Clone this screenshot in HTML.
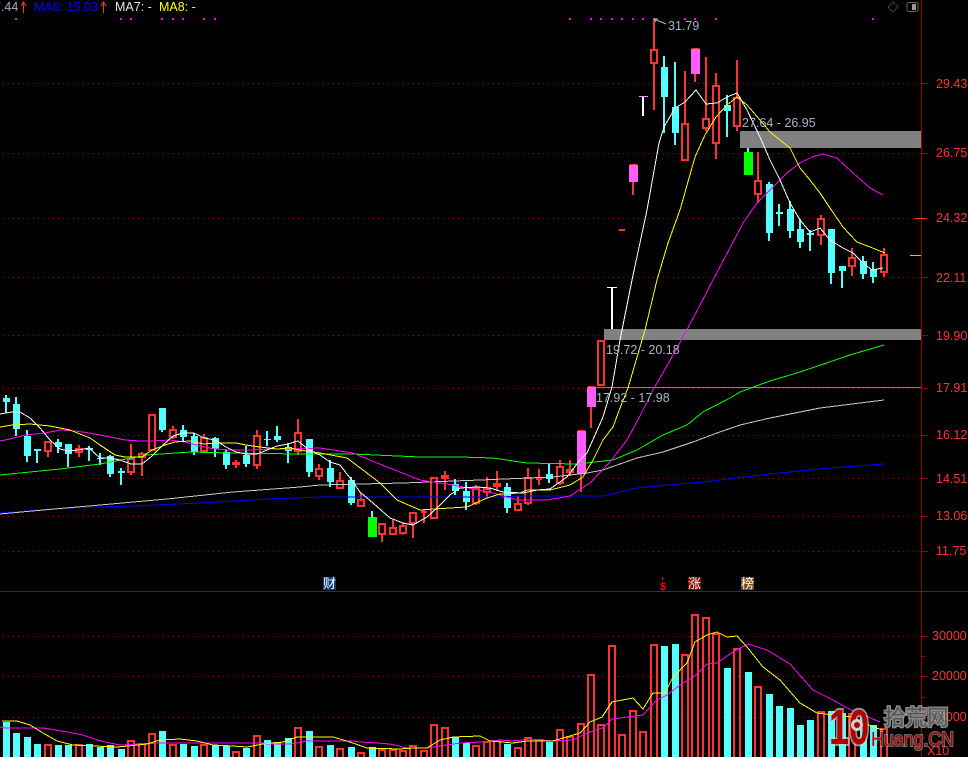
<!DOCTYPE html>
<html><head><meta charset="utf-8"><title>K线图</title>
<style>
html,body{margin:0;padding:0;background:#000;width:968px;height:757px;overflow:hidden}
svg{display:block}
text{font-family:"Liberation Sans","Noto Sans CJK SC",sans-serif;font-size:12.5px}
.a{fill:#ff3232}
.l{fill:#a8b4c4}
.v{fill:none;stroke-width:1;shape-rendering:crispEdges}
</style></head><body>
<svg width="968" height="757" viewBox="0 0 968 757" xmlns="http://www.w3.org/2000/svg">
<rect width="968" height="757" fill="#000"/>
<!-- grid -->
<g stroke="#a00000" stroke-width="1" stroke-dasharray="1 4" shape-rendering="crispEdges">
<path d="M3 83.5H921M3 153.5H921M3 218.5H921M3 277.5H921M3 335.5H921M3 388.5H921M3 435.5H921M3 478.5H921M3 516.5H921M3 551.5H921M3 636.5H921M3 676.5H921M3 717.5H921"/>
</g>
<!-- axes -->
<g stroke="#a00000" stroke-width="1" shape-rendering="crispEdges" fill="none">
<path d="M921.5 0V757M0 591.5H968"/>
<path d="M921 83.5h7M921 153.5h7M921 218.5h7M921 277.5h7M921 335.5h7M921 388.5h7M921 435.5h7M921 478.5h7M921 516.5h7M921 551.5h7M921 636.5h7M921 676.5h7M921 717.5h7M921 656.5h4M921 697.5h4M921 737.5h4"/>
</g>
<path d="M915 218.5h11" stroke="#ff3232" shape-rendering="crispEdges"/>
<path d="M910 255.5h11" stroke="#cccc00" shape-rendering="crispEdges"/>
<!-- zones -->
<rect x="740" y="131" width="181" height="17" fill="#808080"/>
<rect x="604" y="329" width="317" height="11" fill="#808080"/>
<path d="M596 387.5H921" stroke="#808080" shape-rendering="crispEdges"/>
<!-- top dots -->
<path d="M15 18h2v2h-2zM120 18h2v2h-2zM130 18h2v2h-2zM161 18h2v2h-2zM172 18h2v2h-2zM182 18h2v2h-2zM203 18h2v2h-2zM214 18h2v2h-2zM569 18h2v2h-2zM590 18h2v2h-2zM600 18h2v2h-2zM611 18h2v2h-2zM621 18h2v2h-2zM632 18h2v2h-2zM642 18h2v2h-2zM653 18h2v2h-2zM684 18h2v2h-2zM694 18h2v2h-2zM715 18h2v2h-2zM872 18h2v2h-2z" fill="#ff00ff"/>
<!-- candles: wicks -->
<g shape-rendering="crispEdges">
<path stroke="#ff3232" stroke-width="2" fill="none" d="M48 441V457M79 445V457M131 444V475M142 452V476M173 426V439M204 434V453M236 460V468M257 430V469M298 419V455M319 464V480M340 472V489M361 493V507M382 523V542M393 520V535M403 523V535M413 512V538M424 510V523M445 471V490M476 485V505M487 477V498M497 471V491M518 496V511M528 468V505M539 469V485M560 460V485M570 460V476M581 474V492M591 407V428M633 182V195M654 19V110M685 71V123M695 74V82M706 57V131M716 73V159M737 60V131M758 152V203M821 215V245M852 248V276M884 248V277"/>
<path stroke="#54ffff" stroke-width="2" fill="none" d="M6 395V413M16 397V436M27 430V462M37 449V463M58 439V453M68 444V467M89 446V461M100 453V465M110 455V477M121 468V485M162 430V432M183 425V441M194 433V455M215 437V457M226 450V469M246 446V467M267 431V446M277 426V442M288 443V463M309 472V477M330 460V487M351 477V505M372 511V517M455 479V495M466 482V510M507 483V513M549 464V483M664 56V133M675 62V145M727 95V137M748 148V152M769 182V241M779 204V226M790 201V238M800 219V248M810 230V251M831 273V284M842 271V288M863 256V279M873 262V283"/>
<!-- hollow red bodies -->
<path stroke="#ff3232" stroke-width="2" fill="#000" d="M45 442h6v9h-6zM76 449h6v3h-6zM128 459h6v13h-6zM139 454h6v3h-6zM149 415h6v35h-6zM170 430h6v7h-6zM201 438h6v13h-6zM233 463h6v1h-6zM254 436h6v29h-6zM295 433h6v18h-6zM316 469h6v7h-6zM337 481h6v7h-6zM358 500h6v6h-6zM379 524h6v10h-6zM390 528h6v6h-6zM400 526h6v7h-6zM410 513h6v10h-6zM421 512h6v0h-6zM431 478h6v40h-6zM442 476h6v2h-6zM473 488h6v15h-6zM484 489h6v3h-6zM494 484h6v2h-6zM515 504h6v6h-6zM525 478h6v25h-6zM536 479h6v0h-6zM557 467h6v16h-6zM567 470h6v2h-6zM598 341h6v44h-6zM619 230h6v0h-6zM651 50h6v13h-6zM682 124h6v36h-6zM703 119h6v9h-6zM713 86h6v57h-6zM734 98h6v28h-6zM755 181h6v13h-6zM818 219h6v16h-6zM849 258h6v8h-6zM881 255h6v17h-6z"/>
<!-- cyan bodies -->
<path fill="#54ffff" d="M3 398h7v4h-7zM13 404h7v25h-7zM24 436h7v20h-7zM34 449h7v2h-7zM55 442h7v5h-7zM65 444h7v10h-7zM86 448h7v2h-7zM97 458h7v1h-7zM107 456h7v18h-7zM118 471h7v2h-7zM159 408h7v22h-7zM180 430h7v7h-7zM191 436h7v16h-7zM212 438h7v11h-7zM223 452h7v13h-7zM243 455h7v9h-7zM264 439h7v1h-7zM274 436h7v4h-7zM285 447h7v4h-7zM306 439h7v33h-7zM327 468h7v14h-7zM348 480h7v23h-7zM452 484h7v7h-7zM463 491h7v11h-7zM504 487h7v21h-7zM546 474h7v5h-7zM661 67h7v30h-7zM672 107h7v26h-7zM724 105h7v6h-7zM766 184h7v49h-7zM776 212h7v2h-7zM787 209h7v22h-7zM797 229h7v13h-7zM807 233h7v2h-7zM828 229h7v44h-7zM839 266h7v5h-7zM860 261h7v13h-7zM870 269h7v8h-7z"/>
<!-- magenta, green, white -->
<path fill="#ff5cff" d="M577 431h9v43h-9zM587 387h9v20h-9zM629 165h9v17h-9zM691 49h9v25h-9z"/>
<path fill="#ff3232" d="M578 430h7v1h-7zM588 386h7v1h-7zM630 164h7v1h-7zM692 48h7v1h-7z"/>
<path fill="#00ff00" d="M744 152h9v23h-9zM368 517h9v20h-9z"/>
<path fill="#fff" d="M611 287h2v42h-2zM642 97h2v19h-2zM607 287h10v1h-10z"/>
<path fill="#ff90ff" d="M639 96h9v1h-9z"/>
</g>
<!-- MA lines -->
<polyline class="v" stroke="#0000ff" points="0,513 67,508 133,506 200,503 267,499 320,497 400,497 500,497 520,496 603,496 637,488 703,482 770,474 830,468 884,464"/>
<polyline class="v" stroke="#c8c8c8" points="0,514 43,510 100,505 167,499 233,492 300,487 320,485 403,483 480,480 553,477 587,473 603,470 637,458 663,452 693,442 717,433 740,425 770,418 820,408 884,400"/>
<polyline class="v" stroke="#00ff00" points="0,475 30,472 60,469 100,464 147,455 190,452 230,453 300,454 353,454 420,457 460,457 493,458 527,463 577,464 613,460 637,450 663,435 687,425 703,412 730,398 740,392 770,381 800,372 850,355 884,345"/>
<polyline class="v" stroke="#ff00ff" points="0,441 10,439 25,435 45,433 60,430 75,431 90,433 105,436 125,440 140,441 152,441 170,440 185,442 200,446 215,449 230,450 250,450 270,449 290,449 320,448 353,453 377,463 420,480 453,485 473,489 493,493 517,500 547,500 570,496 590,483 610,462 627,440 640,416 653,390 668,364 683,337 698,309 713,280 730,248 743,223 757,203 770,190 787,173 800,163 812,157 823,154 837,158 853,173 870,188 883,195"/>
<polyline class="v" stroke="#ffff00" points="0,427 12,425 30,424 50,426 70,430 90,438 100,445 115,455 125,457 142,457 152,450 165,445 175,442 190,441 204,444 215,443 236,443 246,445 260,447 277,449 290,448 300,450 320,453 347,458 363,470 380,483 397,500 420,510 450,508 467,507 487,498 500,494 520,493 527,490 550,490 570,485 583,477 593,460 603,440 613,427 620,408 628,388 645,330 657,280 668,243 680,210 695,157 705,135 716,117 727,105 737,97 747,105 760,120 770,132 790,148 800,168 810,180 820,193 830,208 843,227 857,242 870,247 885,253"/>
<polyline class="v" stroke="#ffffff" points="0,414 12,412 20,412 30,418 40,428 50,440 60,449 68,451 79,450 89,448 100,458 110,458 120,460 131,464 142,464 152,456 162,446 173,436 183,433 194,433 204,438 215,440 226,447 236,452 246,454 257,454 267,450 277,446 288,444 298,441 309,450 320,455 330,462 340,465 350,478 360,492 373,503 390,518 403,523 413,525 427,517 437,508 450,495 460,488 477,487 490,488 503,492 523,493 537,490 550,489 567,477 580,460 587,453 603,417 612,387 620,340 632,280 647,210 659,143 664,127 675,108 685,102 696,90 706,104 717,103 727,97 737,93 747,110 760,137 770,160 780,180 790,203 800,220 810,232 820,228 830,240 843,248 853,253 863,263 872,270 883,268"/>
<!-- labels -->
<path d="M654 19l12 5M654 19l4 0M654 19l2 3" stroke="#a8b4c4" fill="none"/>
<text class="l" x="668" y="30">31.79</text>
<text class="l" x="742" y="127">27.64 - 26.95</text>
<text class="l" x="606" y="354">19.72 - 20.18</text>
<text class="l" x="596" y="402">17.92 - 17.98</text>
<!-- axis text -->
<text class="a" x="936" y="88">29.43</text>
<text class="a" x="936" y="157">26.75</text>
<text class="a" x="936" y="222">24.32</text>
<text class="a" x="936" y="282">22.11</text>
<text class="a" x="936" y="340">19.90</text>
<text class="a" x="936" y="392">17.91</text>
<text class="a" x="936" y="439">16.12</text>
<text class="a" x="936" y="483">14.51</text>
<text class="a" x="936" y="520">13.06</text>
<text class="a" x="936" y="555">11.75</text>
<text class="a" x="932" y="640">30000</text>
<text class="a" x="932" y="680">20000</text>
<text class="a" x="932" y="721">10000</text>
<text class="a" x="927" y="755">X10</text>
<!-- header -->
<text x="-6" y="11" fill="#9fb0c0">7.44</text>
<path d="M23.5 13V2M21 6l2.5-4 2.5 4" stroke="#ff3232" fill="none"/>
<text x="34" y="11" fill="#0000ff">MA6: 15.03</text>
<path d="M103.5 13V2M101 6l2.5-4 2.5 4" stroke="#ff3232" fill="none"/>
<text x="115" y="11" fill="#dfe6ee">MA7: -</text>
<text x="159" y="11" fill="#ffff00">MA8: -</text>
<path d="M893 2l5 5-5 5-5-5z" fill="none" stroke="#777" stroke-dasharray="1 1"/>
<rect x="907" y="2.5" width="11" height="9" rx="2" fill="none" stroke="#666"/>
<rect x="912" y="4" width="4" height="6" fill="#999"/>
<!-- event icons -->
<rect x="323" y="577" width="13" height="13" fill="#0b3a78"/>
<text x="323" y="588" fill="#fff" style="font-family:'WenQuanYi Zen Hei','Noto Sans CJK SC',sans-serif;font-size:13px">财</text>
<path d="M662.5 577v3" stroke="#ff0000"/>
<text x="660" y="590" fill="#ff0000" style="font-size:11px;font-weight:700">$</text>
<rect x="688" y="577" width="13" height="13" fill="#8b0000"/>
<text x="688" y="588" fill="#fff" style="font-family:'WenQuanYi Zen Hei','Noto Sans CJK SC',sans-serif;font-size:13px">涨</text>
<rect x="741" y="577" width="13" height="13" fill="#7a4310"/>
<text x="741" y="588" fill="#fff" style="font-family:'WenQuanYi Zen Hei','Noto Sans CJK SC',sans-serif;font-size:13px">榜</text>
<!-- volume bars -->
<g shape-rendering="crispEdges">
<path fill="#54ffff" d="M3 722h7v35h-7zM13 733h7v24h-7zM24 737h7v20h-7zM34 744h7v13h-7zM55 745h7v12h-7zM65 745h7v12h-7zM86 744h7v13h-7zM97 747h7v10h-7zM107 745h7v12h-7zM118 749h7v8h-7zM159 731h7v26h-7zM180 744h7v13h-7zM191 746h7v11h-7zM212 745h7v12h-7zM223 746h7v11h-7zM243 748h7v9h-7zM264 740h7v17h-7zM274 742h7v15h-7zM285 738h7v19h-7zM306 731h7v26h-7zM327 745h7v12h-7zM348 747h7v10h-7zM369 747h7v10h-7zM452 737h7v20h-7zM463 743h7v14h-7zM504 744h7v13h-7zM546 742h7v15h-7zM661 646h7v111h-7zM672 644h7v113h-7zM724 668h7v89h-7zM745 672h7v85h-7zM766 694h7v63h-7zM776 706h7v51h-7zM787 708h7v49h-7zM797 725h7v32h-7zM807 720h7v37h-7zM828 711h7v46h-7zM839 713h7v44h-7zM860 715h7v42h-7zM870 725h7v32h-7z"/>
<path stroke="#ff3232" stroke-width="2" fill="none" d="M45 745h6v15h-6zM76 745h6v15h-6zM128 741h6v19h-6zM139 744h6v16h-6zM149 734h6v26h-6zM170 745h6v15h-6zM201 745h6v15h-6zM233 752h6v8h-6zM254 736h6v24h-6zM295 728h6v32h-6zM316 747h6v13h-6zM337 749h6v11h-6zM358 753h6v7h-6zM379 750h6v10h-6zM390 750h6v10h-6zM400 751h6v9h-6zM410 746h6v14h-6zM421 751h6v9h-6zM431 725h6v35h-6zM442 728h6v32h-6zM473 746h6v14h-6zM484 742h6v18h-6zM494 741h6v19h-6zM515 748h6v12h-6zM525 738h6v22h-6zM536 740h6v20h-6zM557 730h6v30h-6zM567 737h6v23h-6zM578 724h6v36h-6zM588 675h6v85h-6zM598 725h6v35h-6zM609 646h6v114h-6zM619 735h6v25h-6zM630 711h6v49h-6zM640 732h6v28h-6zM651 645h6v115h-6zM682 655h6v105h-6zM692 615h6v145h-6zM703 618h6v142h-6zM713 634h6v126h-6zM734 649h6v111h-6zM755 687h6v73h-6zM818 712h6v48h-6zM849 714h6v46h-6zM881 729h6v31h-6z"/>
</g>
<!-- volume MAs -->
<polyline class="v" stroke="#ff00ff" points="0,727 5,728 43,728 50,729 67,732 83,735 97,740 110,743 120,745 160,743 230,743 232,743 263,743 267,744 290,744 297,743 307,741 353,741 360,742 377,743 390,744 407,748 427,748 433,747 447,745 460,743 480,742 500,740 513,741 530,739 553,741 573,740 587,733 593,731 603,728 612,719 627,717 643,715 657,700 667,695 680,685 695,676 707,664 717,663 733,652 748,644 767,650 790,664 813,690 833,700 847,708 880,722"/>
<polyline class="v" stroke="#ffff00" points="2,721 17,721 30,725 43,733 57,741 73,745 117,747 128,746 147,744 160,740 180,739 197,741 213,745 233,746 247,747 263,744 283,742 297,737 313,737 333,737 350,742 367,748 400,749 413,748 427,748 440,740 453,737 480,736 490,741 513,743 527,741 553,741 580,733 590,722 602,717 612,702 633,698 643,709 653,693 665,693 673,677 687,663 695,642 707,635 717,632 727,637 737,636 747,647 763,667 780,680 800,703 817,713 833,715 853,717 873,727 883,730"/>
<!-- watermark -->
<text x="829" y="744" textLength="40" lengthAdjust="spacingAndGlyphs" fill="#b00000" stroke="#d0d0d0" stroke-opacity=".7" stroke-width="4" paint-order="stroke" style="font-size:49px;font-weight:700">10</text>
<circle cx="857" cy="725" r="6" fill="#d0d0d0"/>
<circle cx="857" cy="725" r="3" fill="#b00000"/>
<text x="884" y="725" fill="#555" stroke="#c0c0c0" stroke-opacity=".7" stroke-width="3" paint-order="stroke" style="font-size:21.5px">拾荒网</text>
<text x="871" y="746" textLength="83" lengthAdjust="spacingAndGlyphs" fill="#b00000" stroke="#c8c8c8" stroke-opacity=".55" stroke-width="2" paint-order="stroke" style="font-size:20px">Huang.CN</text>
</svg>
</body></html>
